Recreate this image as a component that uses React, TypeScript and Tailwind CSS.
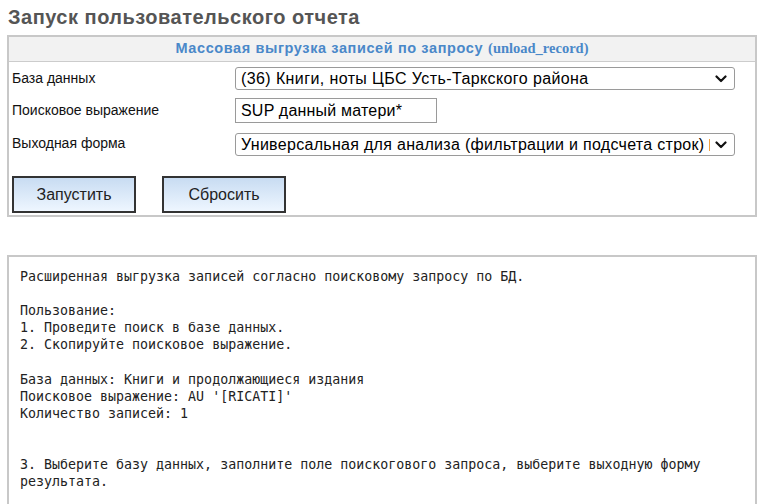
import React from "react";

const Chevron = () => (
  <svg width="12" height="8" viewBox="0 0 12 8" className="shrink-0">
    <path d="M1.5 1.5 L6 6 L10.5 1.5" fill="none" stroke="#111" strokeWidth="2.2" strokeLinecap="round" strokeLinejoin="round" />
  </svg>
);

function FakeSelect({ text, extra }: { text: string; extra?: boolean }) {
  return (
    <div className="flex h-[23px] w-[500px] items-center rounded-[3px] border border-[#9a9a9a] bg-white pl-[5px] pr-[7px]">
      <span
        className={
          extra
            ? "flex-1 overflow-hidden whitespace-nowrap text-[16px] leading-none tracking-[0.3px] text-black"
            : "flex-1 overflow-hidden whitespace-nowrap text-[16px] leading-none tracking-[0.4px] text-black"
        }
      >
        {text}
        {extra && <span className="ml-[5px] inline-block h-[12px] w-[1px] bg-[#f0a040] align-middle" />}
      </span>
      <Chevron />
    </div>
  );
}

const info = `Расширенная выгрузка записей согласно поисковому запросу по БД.

Пользование:
1. Проведите поиск в базе данных.
2. Скопируйте поисковое выражение.

База данных: Книги и продолжающиеся издания
Поисковое выражение: AU '[RICATI]'
Количество записей: 1


3. Выберите базу данных, заполните поле поискогового запроса, выберите выходную форму результата.`;

export default function App() {
  return (
    <div className="h-[504px] w-[764px] overflow-hidden bg-white font-['Liberation_Sans',sans-serif] text-[#111]">
      <h1 className="pl-[8px] pt-[4px] text-[20px] font-bold leading-[26px] tracking-[0.5px] text-[#555]">
        Запуск пользовательского отчета
      </h1>

      <div className="mx-[7px] mt-[5px] border-2 border-[#c8c8c8]">
        <div className="flex h-[25px] items-center justify-center border-b border-[#cccccc] bg-[#f2f2f2] text-[14.5px] font-bold tracking-[0.6px] text-[#4a88c9]">
          Массовая выгрузка записей по запросу
          <span className="ml-[5px] font-['Liberation_Serif',serif] text-[14.5px] tracking-normal">(unload_record)</span>
        </div>

        <div className="mt-[5px] flex items-start">
          <div className="w-[226px] pl-[3px] pt-[1px] text-[14px]">База данных</div>
          <FakeSelect text="(36) Книги, ноты ЦБС Усть-Таркского района" />
        </div>

        <div className="mt-[8px] flex items-start">
          <div className="w-[226px] pl-[3px] pt-[2px] text-[14px]">Поисковое выражение</div>
          <div className="flex h-[25px] w-[202px] items-center border border-[#9a9a9a] pl-[5px] text-[16px] tracking-[0.2px] text-black">
            SUP данный матери*
          </div>
        </div>

        <div className="mt-[10px] flex items-start">
          <div className="w-[226px] pl-[3px] text-[14px]">Выходная форма</div>
          <FakeSelect text="Универсальная для анализа (фильтрации и подсчета строк)" extra />
        </div>

        <div className="mt-[20px] flex gap-[26px] pb-[2px] pl-[3px]">
          <button className="h-[37px] w-[124px] border-2 border-[#333] bg-gradient-to-b from-[#c8dcf2] to-[#eef6ff] text-[16px] text-[#222]">
            Запустить
          </button>
          <button className="h-[37px] w-[124px] border-2 border-[#333] bg-gradient-to-b from-[#c8dcf2] to-[#eef6ff] text-[16px] text-[#222]">
            Сбросить
          </button>
        </div>
      </div>

      <div className="mx-[7px] mt-[38px] h-[300px] border-2 border-[#c8c8c8] pl-[11px] pr-[8px] pt-[11px]">
        <pre className="whitespace-pre-wrap font-['DejaVu_Sans_Mono',monospace] text-[13.3px] leading-[17.1px] text-[#222]">
          {info}
        </pre>
      </div>
    </div>
  );
}
